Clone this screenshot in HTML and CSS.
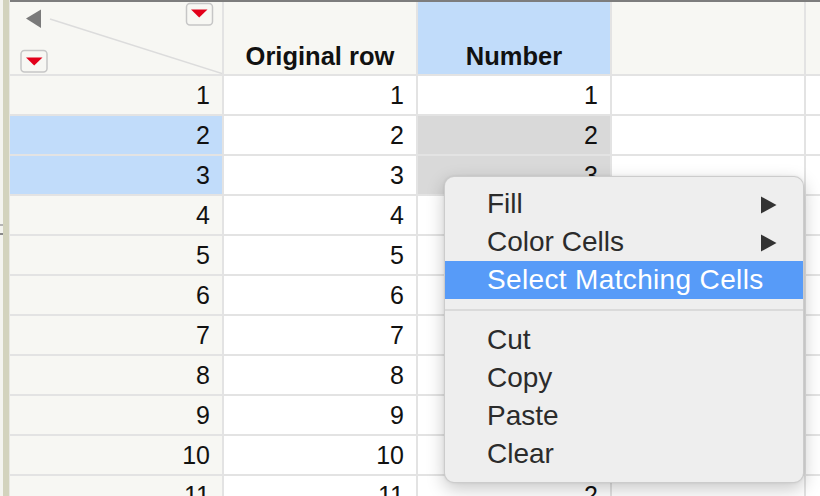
FILE: index.html
```html
<!DOCTYPE html>
<html>
<head>
<meta charset="utf-8">
<link rel="stylesheet" href="styles.css">
</head>
<body>
<div class="window">
  <div class="side">
    <div class="side-light">
      <span class="tick tick-a"></span>
      <span class="tick tick-b"></span>
    </div>
    <div class="side-bar"></div>
    <div class="side-line"></div>
  </div>
  <div class="table">
    <div class="cell corner">
      <svg width="212" height="72" viewBox="0 0 212 72">
        <line x1="40" y1="17" x2="212" y2="71.5" stroke="#dcdcdc" stroke-width="1.5"/>
        <polygon points="16,16.5 31,7.5 31,26" fill="#7a7a7a"/>
        <rect x="176.5" y="1.5" width="26" height="21.5" rx="3.5" fill="#f7f7f3" stroke="#c6c6c6" stroke-width="1.5"/>
        <polygon points="181,7.5 197.5,7.5 189.2,15.5" fill="#e2001a"/>
        <rect x="11" y="48.5" width="26" height="21.5" rx="3.5" fill="#f7f7f3" stroke="#c6c6c6" stroke-width="1.5"/>
        <polygon points="16,55.5 32.5,55.5 24.2,63.5" fill="#e2001a"/>
      </svg>
    </div>
    <div class="cell head">Original row</div>
    <div class="cell head sel">Number</div>
    <div class="cell head"></div>
    <div class="cell head"></div>

    <div class="cell lab">1</div><div class="cell">1</div><div class="cell">1</div><div class="cell"></div><div class="cell"></div>
    <div class="cell lab sel">2</div><div class="cell">2</div><div class="cell gray">2</div><div class="cell"></div><div class="cell"></div>
    <div class="cell lab sel">3</div><div class="cell">3</div><div class="cell gray">3</div><div class="cell"></div><div class="cell"></div>
    <div class="cell lab">4</div><div class="cell">4</div><div class="cell"></div><div class="cell"></div><div class="cell"></div>
    <div class="cell lab">5</div><div class="cell">5</div><div class="cell"></div><div class="cell"></div><div class="cell"></div>
    <div class="cell lab">6</div><div class="cell">6</div><div class="cell"></div><div class="cell"></div><div class="cell"></div>
    <div class="cell lab">7</div><div class="cell">7</div><div class="cell"></div><div class="cell"></div><div class="cell"></div>
    <div class="cell lab">8</div><div class="cell">8</div><div class="cell"></div><div class="cell"></div><div class="cell"></div>
    <div class="cell lab">9</div><div class="cell">9</div><div class="cell"></div><div class="cell"></div><div class="cell"></div>
    <div class="cell lab">10</div><div class="cell">10</div><div class="cell"></div><div class="cell"></div><div class="cell"></div>
    <div class="cell lab">11</div><div class="cell">11</div><div class="cell">2</div><div class="cell"></div><div class="cell"></div>
  </div>

  <div class="menu">
    <div class="item"><span>Fill</span><svg class="arrow" width="17" height="18" viewBox="0 0 17 18"><polygon points="1,0.5 16.5,9 1,17.5" fill="#333"/></svg></div>
    <div class="item"><span>Color Cells</span><svg class="arrow" width="17" height="18" viewBox="0 0 17 18"><polygon points="1,0.5 16.5,9 1,17.5" fill="#333"/></svg></div>
    <div class="item active"><span>Select Matching Cells</span></div>
    <div class="sep"><div class="sep-line"></div></div>
    <div class="item"><span>Cut</span></div>
    <div class="item"><span>Copy</span></div>
    <div class="item"><span>Paste</span></div>
    <div class="item"><span>Clear</span></div>
  </div>
</div>
</body>
</html>
```

FILE: styles.css
```css
html, body {
  margin: 0;
  padding: 0;
  width: 820px;
  height: 496px;
  overflow: hidden;
  background: #ffffff;
}

.window {
  position: relative;
  display: flex;
  width: 820px;
  height: 496px;
  overflow: hidden;
  font-family: "Liberation Sans", Arial, sans-serif;
}

.side {
  display: flex;
  flex: 0 0 10px;
}

.side-light {
  width: 3px;
  background: #f4f4ef;
  display: flex;
  flex-direction: column;
  padding-top: 224px;
  gap: 7px;
}

.tick {
  display: block;
  height: 2px;
}

.tick-a { background: #b4b4b4; }
.tick-b { background: #8a8a8a; }

.side-bar {
  width: 6px;
  background: #d3d3bd;
}

.side-line {
  width: 1px;
  background: #e8e8e2;
}

.table {
  flex: 1;
  display: grid;
  grid-template-columns: 212px 192px 192px 192px 1fr;
  grid-template-rows: 72px;
  grid-auto-rows: 38px;
  gap: 2px;
  background: #e3e3e3;
  border-top: 2px solid #7d7d7d;
  align-content: start;
}

.cell {
  background: #ffffff;
  font-size: 25px;
  line-height: 38px;
  color: #111;
  text-align: right;
  padding-right: 12px;
  white-space: nowrap;
  overflow: hidden;
}

.cell.lab {
  background: #f7f7f3;
}

.cell.sel {
  background: #c1dcfa;
}

.cell.gray {
  background: #d9d9d9;
}

.cell.head {
  background: #f7f7f3;
  font-weight: bold;
  font-size: 25.5px;
  line-height: 30px;
  text-align: center;
  padding: 0 0 3px 0;
  display: flex;
  align-items: flex-end;
  justify-content: center;
}

.cell.head.sel {
  background: #c1dcfa;
}

.cell.corner {
  background: #f7f7f3;
  padding: 0;
  display: block;
}

.cell.corner svg {
  display: block;
}

.menu {
  position: absolute;
  left: 444px;
  top: 176px;
  width: 360px;
  height: 307px;
  box-sizing: border-box;
  padding: 8px 0 9px 0;
  background: #eeeeee;
  border: 1px solid rgba(0, 0, 0, 0.14);
  border-radius: 10px;
  box-shadow: 0 6px 18px rgba(0, 0, 0, 0.22), 0 0 3px rgba(0, 0, 0, 0.08);
  display: flex;
  flex-direction: column;
  font-size: 28px;
  color: #2b2b2b;
}

.item {
  height: 38px;
  line-height: 38px;
  padding: 0 26px 0 42px;
  display: flex;
  align-items: center;
  justify-content: space-between;
  white-space: nowrap;
}

.item.active {
  background: #579bf8;
  color: #ffffff;
  letter-spacing: 0.35px;
}

.arrow {
  display: block;
  margin-top: 2px;
}

.sep {
  height: 24px;
  display: flex;
  flex-direction: column;
  justify-content: center;
}

.sep-line {
  height: 2px;
  background: #dadada;
}
```
